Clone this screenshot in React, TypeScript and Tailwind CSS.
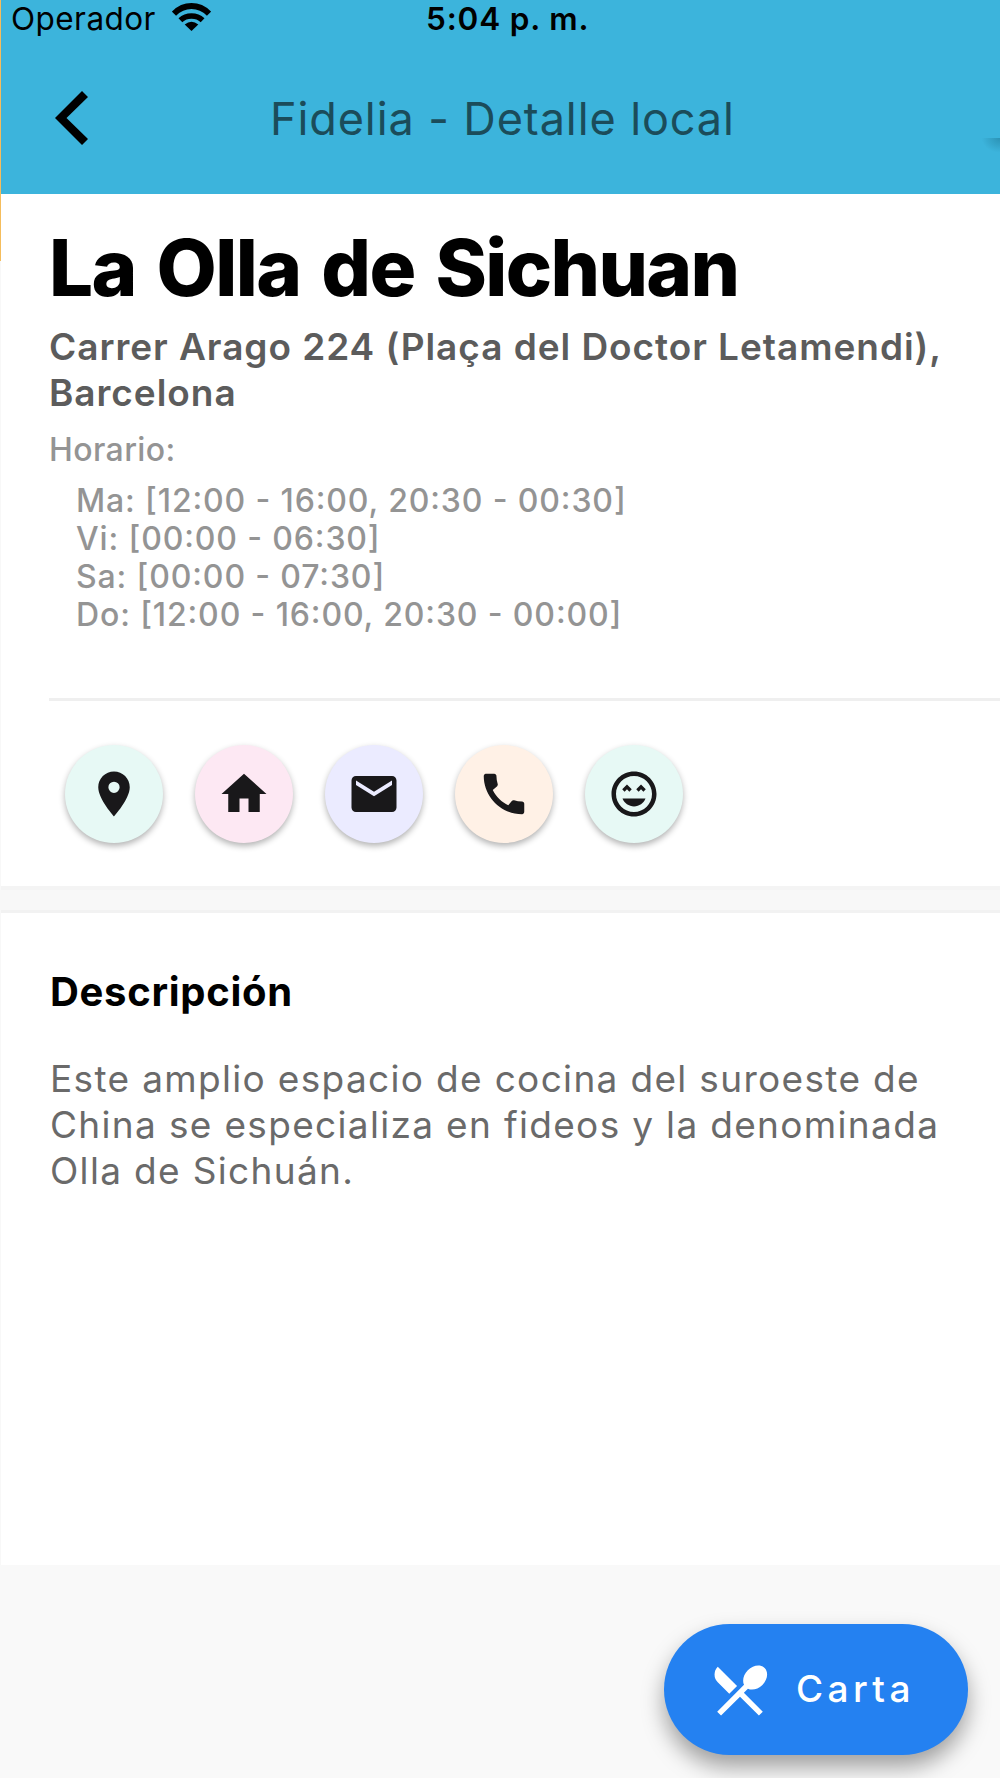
import React from 'react';
import { MdCall, MdHome, MdLocationOn, MdMail, MdRestaurantMenu } from 'react-icons/md';

interface ContactAction {
  label: string;
  icon: React.ReactNode;
  className: string;
}

const WifiIcon = () => (
  <svg className="h-[28px] w-[39px]" viewBox="0 0 39 28" fill="none" stroke="currentColor">
    <path d="M2 10.6Q9.5 3 19.5 3T37 10.6" strokeWidth="5.8" />
    <path d="M8.4 17.2Q13 13 19.5 13T30.6 17.2" strokeWidth="5.6" />
    <path d="M12.7 21.6Q19.5 16 26.3 21.6L19.5 28Z" fill="currentColor" stroke="none" />
  </svg>
);

const HappyIcon = () => (
  <svg className="h-[1em] w-[1em]" viewBox="0 0 24 24" fill="currentColor">
    <path d="M11.99 2C6.47 2 2 6.47 2 12s4.47 10 9.99 10S22 17.53 22 12 17.52 2 11.99 2zM12 20c-4.42 0-8-3.58-8-8s3.58-8 8-8 8 3.58 8 8-3.58 8-8 8z" />
    <path d="M13 9.94L14.06 11l1.06-1.06L16.18 11l1.06-1.06-2.12-2.12zM8.88 9.94L9.94 11 11 9.94 8.88 7.82 6.76 9.94 7.82 11z" />
    <path d="M12 17.5c2.33 0 4.31-1.46 5.11-3.5H6.89c.8 2.04 2.78 3.5 5.11 3.5z" />
  </svg>
);

const schedule = [
  'Ma: [12:00 - 16:00, 20:30 - 00:30]',
  'Vi: [00:00 - 06:30]',
  'Sa: [00:00 - 07:30]',
  'Do: [12:00 - 16:00, 20:30 - 00:00]'
];

const actions: ContactAction[] = [
  { label: 'Ubicación', icon: <MdLocationOn />, className: 'bg-[#e7f9f5]' },
  { label: 'Web', icon: <MdHome />, className: 'bg-[#fde8f3]' },
  { label: 'Correo', icon: <MdMail />, className: 'bg-[#ebebff]' },
  { label: 'Teléfono', icon: <MdCall />, className: 'bg-[#fff1e6]' },
  { label: 'Opiniones', icon: <HappyIcon />, className: 'bg-[#e7f9f5]' }
];

const StatusBar = () => (
  <div className="relative flex h-[38px] items-center pl-[11px]">
    <span className="text-[31.5px] leading-[37px] tracking-[0.45px] -mt-px">Operador</span>
    <span className="-mt-1 ml-4"><WifiIcon /></span>
    <span className="absolute left-[426px] top-0 text-[31.5px] leading-[37px] font-semibold tracking-[0.85px]">
      5:04 p. m.
    </span>
  </div>
);

const Header = () => (
  <header className="relative h-[194px] overflow-hidden bg-[#3cb4dc]">
    <StatusBar />
    <div className="flex h-[160px] items-center pl-[55px]">
      <button type="button" aria-label="Volver">
        <svg className="h-[54px] w-[33px]" viewBox="0 0 33 54">
          <path d="M27 0L33 6L11.5 27L33 48L27 54L0 27Z" />
        </svg>
      </button>
      <h1 className="ml-[182px] text-[45px] leading-none tracking-[0.9px] text-[#1b4c5a]">
        Fidelia - Detalle local
      </h1>
    </div>
    <div className="absolute right-0 top-[138px] h-4 w-5 bg-[radial-gradient(ellipse_at_top_right,rgba(0,60,80,0.28),transparent_65%)]" />
  </header>
);

const LocalInfo = () => (
  <section className="h-[692px] bg-white pl-[49px]">
    <h2 className="pt-[26px] text-[78px] leading-[96px] font-extrabold tracking-[-1.65px] text-black [word-spacing:5.5px]">
      La Olla de Sichuan
    </h2>
    <p className="mt-2 text-[37px] leading-[46px] font-semibold tracking-[0.95px] text-[#5c5c5c]">
      Carrer Arago 224 (Plaça del Doctor Letamendi),
      <br />
      Barcelona
    </p>
    <p className="mt-[15px] text-[32px] leading-[38px] font-medium tracking-[0.4px] text-[#949494]">
      Horario:
    </p>
    <ul className="mt-[13px] pl-[27px] text-[32px] leading-[38px] font-medium tracking-[0.87px] text-[#949494] [font-feature-settings:'calt'_1]">
      {schedule.map(line => (
        <li key={line}>{line}</li>
      ))}
    </ul>
    <hr className="mt-16 border-t-[3px] border-[#efefef]" />
    <div className="mt-11 flex gap-8 pl-4">
      {actions.map(action => (
        <button
          key={action.label}
          type="button"
          aria-label={action.label}
          className={`flex h-[98px] w-[98px] items-center justify-center rounded-full text-[54px] text-[#19181a] shadow-[0_3px_6px_rgba(0,0,0,0.3)] ${action.className}`}
        >
          {action.icon}
        </button>
      ))}
    </div>
  </section>
);

const Description = () => (
  <section className="h-[652px] bg-white pl-[50px] pt-[55px]">
    <h3 className="text-[40px] leading-[48px] font-bold tracking-[0.7px] text-black">Descripción</h3>
    <p className="mt-10 text-[37px] leading-[46px] tracking-[1.33px] text-[#6a6a6a]">
      Este amplio espacio de cocina del suroeste de
      <br />
      China se especializa en fideos y la denominada
      <br />
      Olla de Sichuán.
    </p>
  </section>
);

export default function App() {
  return (
    <div className="relative flex h-[1778px] w-[1000px] flex-col overflow-hidden bg-[#f9f9f9] font-['Inter',sans-serif] whitespace-nowrap">
      <Header />
      <LocalInfo />
      <div className="h-[27px] border-t-[4px] border-b-[3px] border-t-[#f4f4f4] border-b-[#f2f2f2] bg-[#f8f8f8]" />
      <Description />
      <div className="flex grow justify-end pr-8 pt-[59px]">
        <button
          type="button"
          className="flex h-[131px] w-[304px] items-center rounded-full bg-[#2481f1] pl-[43px] text-white shadow-[0_12px_22px_rgba(0,0,0,0.36)]"
        >
          <MdRestaurantMenu className="text-[66px]" />
          <span className="-mt-0.5 ml-[23px] text-[37px] leading-none font-medium tracking-[4.4px]">Carta</span>
        </button>
      </div>
      {/* thin accent running down the left edge */}
      <div className="absolute left-0 top-0 h-[261px] w-px bg-[#f5bd5c]" />
      <div className="absolute left-0 top-[261px] h-[1304px] w-px bg-[#f8f8f8]" />
    </div>
  );
}
